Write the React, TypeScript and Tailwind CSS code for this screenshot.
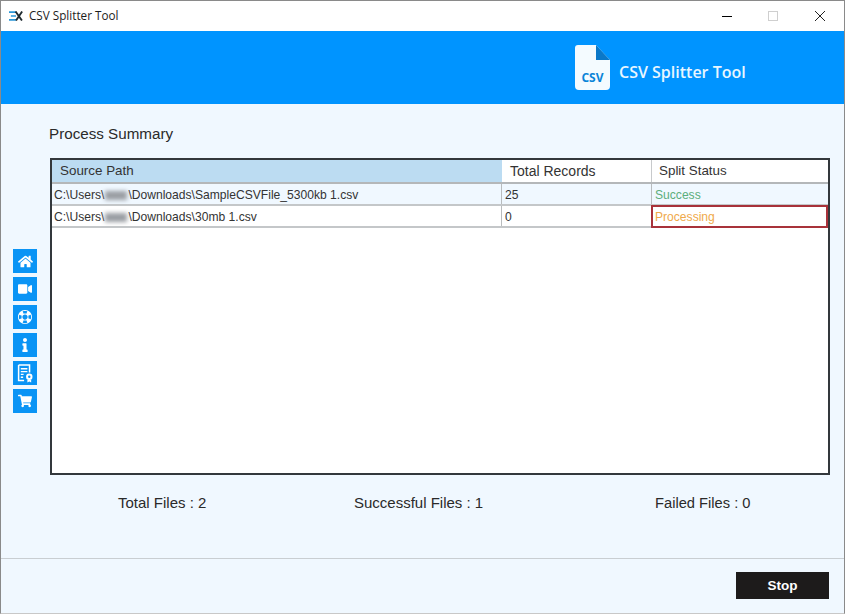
import { FaHome, FaVideo, FaInfo, FaShoppingCart } from "react-icons/fa";
import { ImLifebuoy } from "react-icons/im";

const sans = "font-['Liberation_Sans',Arial,sans-serif]";

function CertIcon() {
  return (
    <svg viewBox="0 0 18 20" className="h-[19px] w-[17px]">
      <path d="M1.700 1h11.600v8M7.500 17.300H1.700V1" fill="none" stroke="#fff" strokeWidth="1.600" />
      <path d="M4 5h7M4 8h7M4 11h3M4 14h2.500" stroke="#fff" strokeWidth="1.400" />
      <circle cx="13" cy="13.500" r="3.400" fill="#fff" />
      <circle cx="13" cy="13.500" r="1.300" fill="#0a94f5" />
      <path d="M11 16.500v3l2-1 2 1v-3z" fill="#fff" />
    </svg>
  );
}

function SideButton({ children }: { children: React.ReactNode }) {
  return (
    <div className="flex h-6 w-6 items-center justify-center bg-[#0a94f5] text-white">
      {children}
    </div>
  );
}

function FileIcon() {
  return (
    <svg viewBox="0 0 35 45" className="h-[45px] w-[35px] shrink-0">
      <path
        d="M3 0H21L35 15V41a4 4 0 0 1-4 4H4a4 4 0 0 1-4-4V3a3 3 0 0 1 3-3z"
        fill="#f4fbff"
      />
      <path d="M21 0L35 15H21z" fill="#0a78c8" />
    </svg>
  );
}

function Row({
  name,
  records,
  status,
  tint,
}: {
  name: string;
  records: string;
  status: React.ReactNode;
  tint?: boolean;
}) {
  return (
    <div
      className={`flex h-[22px] border-b-2 border-[#c4c7c9] text-[12.100px] text-[#333] ${
        tint ? "bg-[#f0f8ff]" : "bg-white"
      }`}
    >
      <div className="flex w-[450px] items-center border-r border-[#b9bcbe] pl-[2px] pt-[2px]">
        C:\Users\
        <span className="mx-[1px] h-[9px] w-[22px] bg-[#9a9ea3] blur-[2px]" />
        \Downloads\{name}
      </div>
      <div className="flex w-[150px] items-center border-r border-[#b9bcbe] pl-[3px] pt-[2px]">
        {records}
      </div>
      {status}
    </div>
  );
}

export default function App() {
  return (
    <div
      className={`flex h-[614px] w-[845px] flex-col overflow-hidden border-x border-y border-x-[#8a8a8a] border-t-[#8a8a8a] border-b-[#c8c8c8] bg-[#f0f8ff] ${sans}`}
    >
      {/* title bar */}
      <div className="flex h-[30px] shrink-0 items-center bg-white pl-[8px] font-['Open_Sans',sans-serif] text-[11.700px] text-[#1c1c1c]">
        <svg viewBox="0 0 16 10" className="h-[10px] w-[15px]">
          <path d="M0 .9h7.500M2 5h5.500M0 9.100h7.500" stroke="#2b97d8" strokeWidth="1.800" />
          <path d="M7 .2l6.800 9.600M14 .2L7.500 9.800" stroke="#1f2a30" strokeWidth="2" fill="none" />
        </svg>
        <span className="ml-[5px]">CSV Splitter Tool</span>
        <div className="ml-auto flex items-center">
          <span className="h-[1px] w-[10px] bg-black" />
          <span className="ml-[36px] h-[10px] w-[10px] border border-[#cfcfcf]" />
          <svg viewBox="0 0 10 10" className="ml-[37px] mr-[19px] h-[10px] w-[10px]">
            <path d="M0 0l10 10M10 0L0 10" stroke="#222" strokeWidth="1" />
          </svg>
        </div>
      </div>

      {/* blue banner */}
      <div className="flex h-[73px] shrink-0 items-center bg-[#0094ff] pl-[574px]">
        <div className="relative">
          <FileIcon />
          <span className="absolute bottom-[3px] left-0 w-[35px] text-center font-['Open_Sans',sans-serif] text-[12px] font-bold text-[#0a84d8]">
            CSV
          </span>
        </div>
        <span className="ml-[9px] mt-[9px] font-['Open_Sans',sans-serif] text-[16px] font-semibold text-[#e8f6ff]">
          CSV Splitter Tool
        </span>
      </div>

      {/* body */}
      <div className="flex min-h-0 flex-1">
        <div className="flex w-[49px] shrink-0 flex-col gap-1 pl-[12px] pt-[145px]">
          <SideButton>
            <FaHome size={15} />
          </SideButton>
          <SideButton>
            <FaVideo size={14} />
          </SideButton>
          <SideButton>
            <ImLifebuoy size={14} />
          </SideButton>
          <SideButton>
            <FaInfo size={14} />
          </SideButton>
          <SideButton>
            <CertIcon />
          </SideButton>
          <SideButton>
            <FaShoppingCart size={14} />
          </SideButton>
        </div>

        <div className="flex min-w-0 flex-1 flex-col">
          <div className="-ml-[1px] mt-[20px] h-[19px] text-[15.200px] leading-[19px] text-[#2a2a2a]">
            Process Summary
          </div>
          <div className="mt-[15px] h-[317px] w-[780px] border-2 border-[#33383c] bg-white">
            <div className="flex h-[24px] border-b-2 border-[#b4b7b9] text-[13.400px] text-[#333]">
              <div className="flex w-[450px] items-center bg-[#bcdcf2] pl-[8px] pt-[1px]">
                Source Path
              </div>
              <div className="flex w-[150px] items-center border-r border-[#c8cacc] pl-[8px] pt-[1px] text-[14px]">
                Total Records
              </div>
              <div className="flex flex-1 items-center pl-[7px] pt-[1px]">Split Status</div>
            </div>
            <Row
              tint
              name="SampleCSVFile_5300kb 1.csv"
              records="25"
              status={
                <div className="flex flex-1 items-center pl-[3px] pt-[2px] text-[#5cae7c]">
                  Success
                </div>
              }
            />
            <Row
              name="30mb 1.csv"
              records="0"
              status={
                <div className="-ml-[1px] -mt-[1px] flex h-[23px] flex-1 items-center border-2 border-[#a8323a] pl-[2px] pt-[1px] text-[#efa94a]">
                  Processing
                </div>
              }
            />
          </div>
          <div className="mt-[19px] flex h-[18px] text-[15px] leading-[18px] text-[#2a2a2a]">
            <span className="ml-[68px] w-[236px]">Total Files : 2</span>
            <span className="w-[301px]">Successful Files : 1</span>
            <span className="text-[14.700px]">Failed Files : 0</span>
          </div>
        </div>
      </div>

      {/* footer */}
      <div className="flex h-[55px] shrink-0 items-start justify-end border-t border-[#c9ced2] pr-[15px] pt-[13px]">
        <button
          type="button"
          className="h-[27px] w-[93px] bg-[#1d1b1b] pt-[2px] text-[13.500px] font-bold text-white"
        >
          Stop
        </button>
      </div>
    </div>
  );
}
